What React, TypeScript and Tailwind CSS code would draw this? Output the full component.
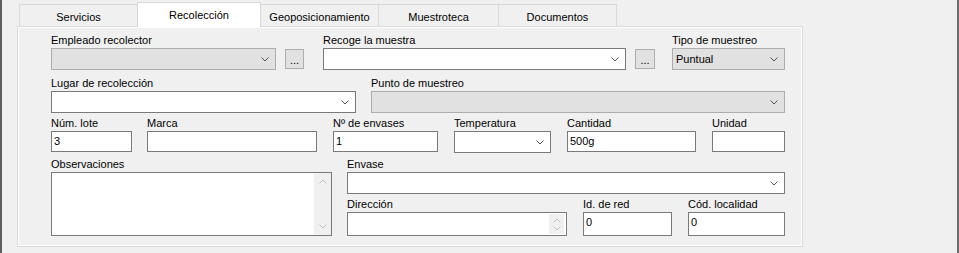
import React from 'react';
import clsx from 'clsx';

const Chevron = ({ up = false, color = '#555555' }: { up?: boolean; color?: string }) => (
  <svg width="8" height="5" viewBox="0 0 8 5" className="shrink-0">
    <polyline
      points={up ? '0.5,4.5 4,1 7.5,4.5' : '0.5,0.5 4,4 7.5,0.5'}
      fill="none"
      stroke={color}
      strokeWidth="1"
    />
  </svg>
);

const Label = ({ children }: { children: React.ReactNode }) => (
  <div className="h-[13px] leading-[13px] text-[11px] whitespace-nowrap">{children}</div>
);

function Combo({ disabled, value, className }: { disabled?: boolean; value?: string; className: string }) {
  return (
    <div
      className={clsx(
        'flex items-center justify-between border pl-[3px] pr-[6px] h-[22px] text-[11px] leading-[13px]',
        disabled ? 'bg-[#e1e1e1] border-[#adadad]' : 'bg-white border-[#7a7a7a]',
        className
      )}
    >
      <span>{value}</span>
      <Chevron />
    </div>
  );
}

function TextBox({ value, className }: { value?: string; className: string }) {
  return (
    <div className={clsx('border border-[#7a7a7a] bg-white pl-[2px] pt-[3px] text-[11px] leading-[13px]', className)}>
      {value}
    </div>
  );
}

function Field({ label, className, children }: { label: string; className?: string; children: React.ReactNode }) {
  return (
    <div className={clsx('flex flex-col', className)}>
      <Label>{label}</Label>
      <div className="mt-px">{children}</div>
    </div>
  );
}

const Dots = ({ className }: { className: string }) => (
  <div
    className={clsx(
      'flex items-end justify-center pb-[4px] h-[20px] border border-[#adadad] bg-[#e1e1e1] text-[11px] leading-[8px]',
      className
    )}
  >
    ...
  </div>
);

const tabs = ['Servicios', 'Recolección', 'Geoposicionamiento', 'Muestroteca', 'Documentos'];
const tabWidths = ['w-[119px]', 'w-[124px]', 'w-[119px]', 'w-[121px]', 'w-[119px]'];

export default function App() {
  return (
    <div className="flex w-[959px] h-[253px] overflow-hidden bg-[#f0f0f0] text-black font-['Liberation_Sans',Arial,sans-serif]">
      {/* left edge of the window behind */}
      <div className="w-[2px] bg-[#5e5e5e]" />

      <div className="w-[955px] flex flex-col">
        {/* Tabs */}
        <div className="flex items-end h-[24px] mt-[2px] pl-[17px]">
          {tabs.map((t, i) => {
            const active = i === 1;
            return (
              <div
                key={t}
                className={clsx(
                  'flex justify-center pt-[6px] text-[11px] leading-[13px] border border-b-0 border-[#d9d9d9]',
                  i > 0 && '-ml-px',
                  tabWidths[i],
                  active ? 'relative z-10 h-[25px] -mb-px bg-white' : 'h-[22px] bg-[#f0f0f0]'
                )}
              >
                {t}
              </div>
            );
          })}
        </div>

        {/* Tab page */}
        <div className="ml-[15px] w-[786px] h-[221px] border border-[#d9d9d9] shadow-[inset_1px_1px_0_#ffffff,inset_-1px_-1px_0_#ffffff] pl-[33px] pt-[7px]">
          {/* Row 1 */}
          <div className="flex items-start">
            <Field label="Empleado recolector">
              <Combo disabled className="w-[225px]" />
            </Field>
            <Dots className="ml-[9px] mt-[15px] w-[19px]" />
            <Field label="Recoge la muestra" className="ml-[19px]">
              <Combo className="w-[303px]" />
            </Field>
            <Dots className="ml-[9px] mt-[15px] w-[20px]" />
            <Field label="Tipo de muestreo" className="ml-[17px]">
              <Combo disabled value="Puntual" className="w-[113px]" />
            </Field>
          </div>

          {/* Row 2 */}
          <div className="flex items-start mt-[7px]">
            <Field label="Lugar de recolección">
              <Combo className="w-[305px]" />
            </Field>
            <Field label="Punto de muestreo" className="ml-[15px]">
              <Combo disabled className="w-[414px]" />
            </Field>
          </div>

          {/* Row 3 */}
          <div className="flex items-start mt-[4px]">
            <Field label="Núm. lote">
              <TextBox value="3" className="w-[81px] h-[21px]" />
            </Field>
            <Field label="Marca" className="ml-[15px]">
              <TextBox className="w-[170px] h-[21px]" />
            </Field>
            <Field label="Nº de envases" className="ml-[16px]">
              <TextBox value="1" className="w-[105px] h-[21px]" />
            </Field>
            <Field label="Temperatura" className="ml-[16px]">
              <Combo className="w-[97px]" />
            </Field>
            <Field label="Cantidad" className="ml-[16px]">
              <TextBox value="500g" className="w-[129px] h-[21px]" />
            </Field>
            <Field label="Unidad" className="ml-[16px]">
              <TextBox className="w-[73px] h-[21px]" />
            </Field>
          </div>

          {/* Row 4 */}
          <div className="flex items-start mt-[5px]">
            <Field label="Observaciones">
              <div className="flex w-[281px] h-[64px] border border-[#7a7a7a] bg-white">
                <div className="flex-1" />
                <div className="w-[17px] flex flex-col justify-between bg-[#f0f0f0]">
                  <div className="h-[17px] flex items-center justify-center">
                    <Chevron up color="#c2c2c2" />
                  </div>
                  <div className="h-[17px] flex items-center justify-center">
                    <Chevron color="#c2c2c2" />
                  </div>
                </div>
              </div>
            </Field>

            <div className="ml-[15px] w-[438px] flex flex-col">
              <Field label="Envase">
                <Combo className="w-[438px]" />
              </Field>
              <div className="flex items-start mt-[4px]">
                <Field label="Dirección">
                  <div className="flex w-[220px] h-[24px] border border-[#7a7a7a] bg-white">
                    <div className="flex-1" />
                    <div className="w-[15px] my-px mr-[2px] flex flex-col items-center justify-center gap-[3px] bg-[#f0f0f0]">
                      <Chevron up color="#c2c2c2" />
                      <Chevron color="#c2c2c2" />
                    </div>
                  </div>
                </Field>
                <Field label="Id. de red" className="ml-[16px]">
                  <TextBox value="0" className="w-[89px] h-[24px]" />
                </Field>
                <Field label="Cód. localidad" className="ml-[16px]">
                  <TextBox value="0" className="w-[97px] h-[24px]" />
                </Field>
              </div>
            </div>
          </div>
        </div>
      </div>

      {/* right edge */}
      <div className="w-[2px] bg-[#6b6b6b]" />
    </div>
  );
}
